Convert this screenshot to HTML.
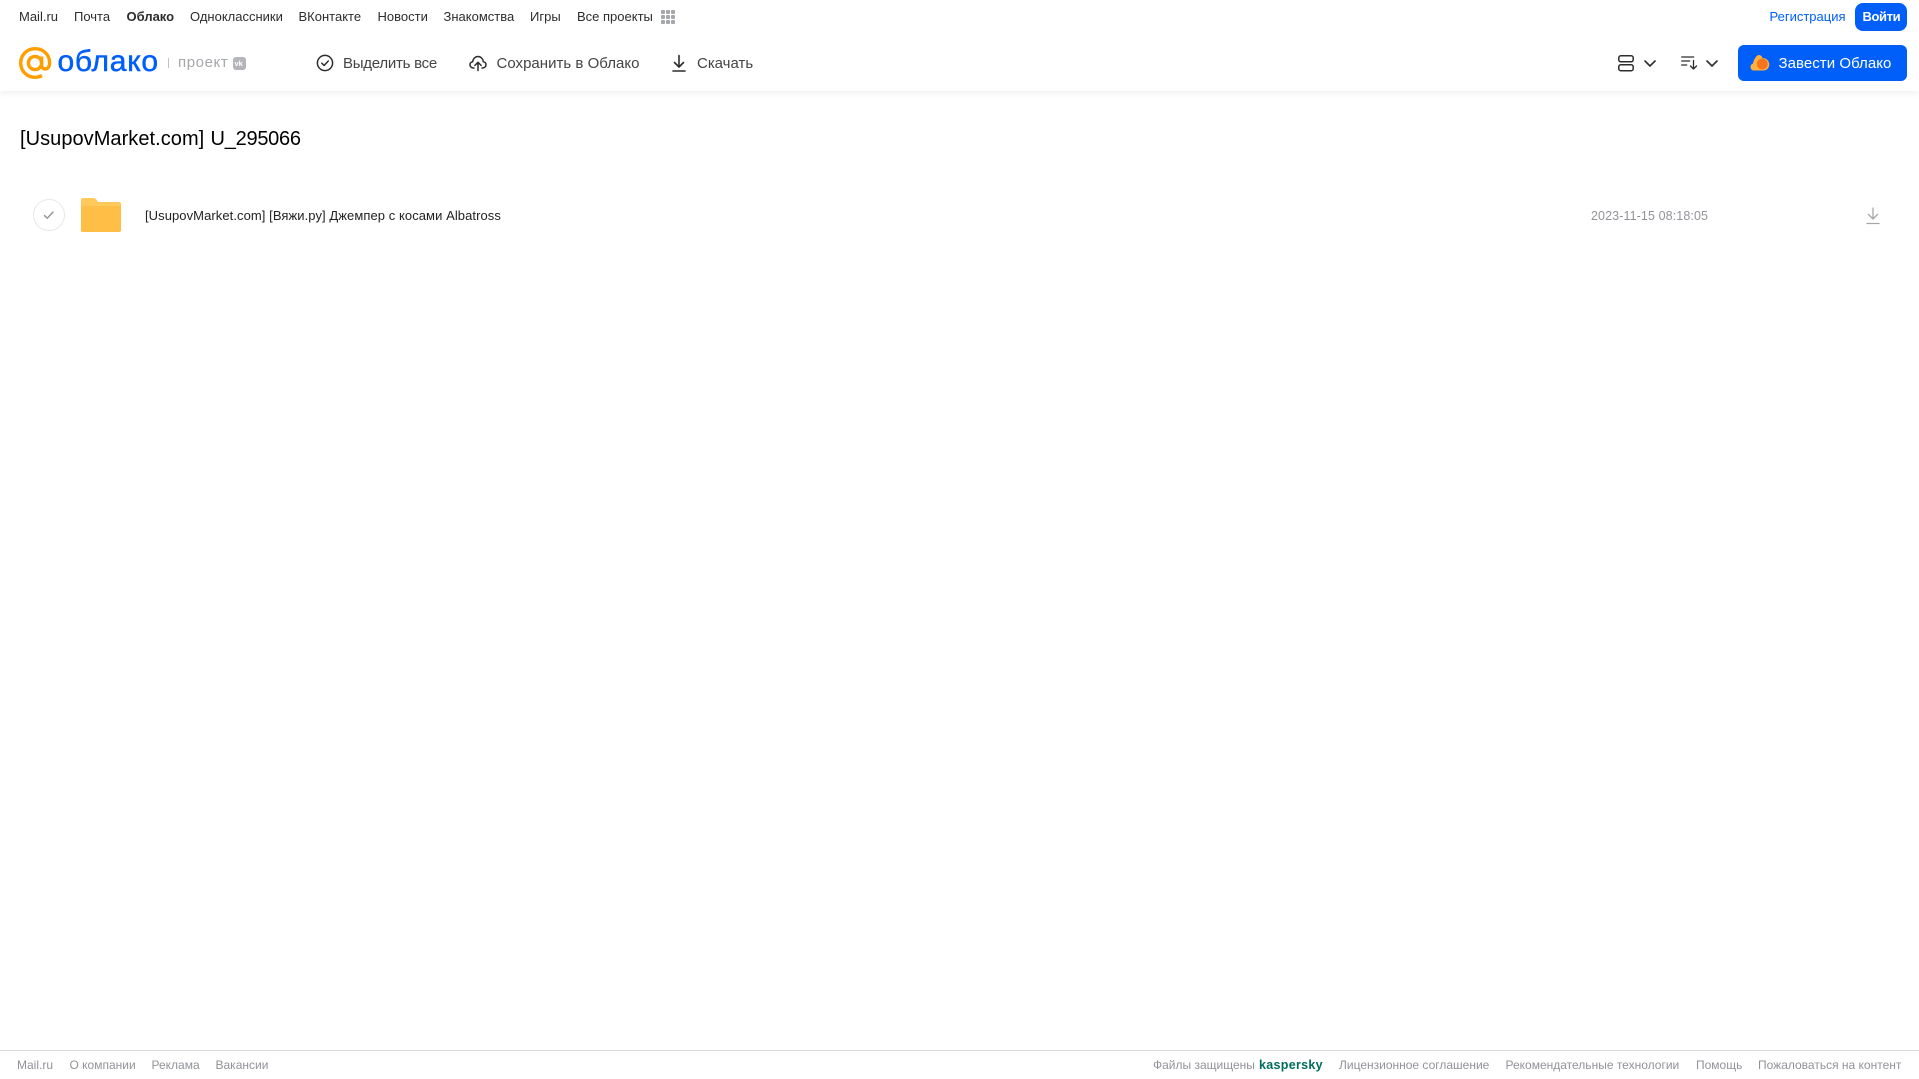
<!DOCTYPE html>
<html lang="ru">
<head>
<meta charset="utf-8">
<title>Облако</title>
<style>
html,body{margin:0;padding:0;background:#fff;width:1919px;height:1079px;overflow:hidden}
body{position:relative;font-family:"Liberation Sans","Noto Sans CJK SC",sans-serif}
.t{position:absolute;white-space:nowrap;line-height:18px}
.n{font-size:13px;top:8px;color:#2c2d2e}
.a{font-size:15px;top:55px;color:#444}
.f{font-size:12px;top:1056px;color:#919399}
svg{position:absolute;overflow:visible}
#hd{position:absolute;left:0;top:0;width:1919px;height:91px;background:#fff;box-shadow:0 2px 6px rgba(0,0,0,.07)}
</style>
</head>
<body>
<div id="hd"></div>

<span class="t n" style="left:19px">Mail.ru</span>
<span class="t n" style="left:74px">Почта</span>
<span class="t n" style="left:126.5px;font-weight:bold">Облако</span>
<span class="t n" style="left:190px">Одноклассники</span>
<span class="t n" style="left:298.5px">ВКонтакте</span>
<span class="t n" style="left:377.5px">Новости</span>
<span class="t n" style="left:443.5px">Знакомства</span>
<span class="t n" style="left:530px">Игры</span>
<span class="t n" style="left:577px">Все проекты</span>
<svg style="left:661px;top:10px" width="14" height="14" fill="#a5a7ab">
<rect x="0" y="0" width="4" height="4" rx="1"/><rect x="5" y="0" width="4" height="4" rx="1"/><rect x="10" y="0" width="4" height="4" rx="1"/>
<rect x="0" y="5" width="4" height="4" rx="1"/><rect x="5" y="5" width="4" height="4" rx="1"/><rect x="10" y="5" width="4" height="4" rx="1"/>
<rect x="0" y="10" width="4" height="4" rx="1"/><rect x="5" y="10" width="4" height="4" rx="1"/><rect x="10" y="10" width="4" height="4" rx="1"/>
</svg>

<span class="t n" style="left:1769.5px;color:#005ff9">Регистрация</span>
<div style="position:absolute;left:1855px;top:3px;width:52px;height:28px;border-radius:8px;background:#005ff9"></div>
<span class="t n" style="left:1862.5px;color:#fff;font-weight:bold;letter-spacing:-.4px">Войти</span>

<!-- logo -->
<svg style="left:19px;top:47px" width="33" height="33" viewBox="0 0 33 33" fill="none" stroke="#ff9e00" stroke-width="3.4">
<circle cx="16" cy="16" r="6.6"/>
<path d="M22.6 9.5v8.5c0 5.5 7.6 5.500 8-1.500C31 8 24.500 1.700 16 1.700 8 1.700 1.700 8 1.700 16S8 30.300 16 30.300c2.800 0 5-.6 7-1.800"/>
</svg>
<span class="t" style="left:57.500px;top:44px;font-size:30px;line-height:36px;color:#005ff9;letter-spacing:.75px;-webkit-text-stroke:.5px #005ff9">облако</span>
<div style="position:absolute;left:168px;top:58px;width:1px;height:10px;background:#bfc1c5"></div>
<span class="t" style="left:178px;top:54px;font-size:15px;color:#a5a7ab;letter-spacing:.6px">проект</span>
<div style="position:absolute;left:232.500px;top:56.500px;width:13.500px;height:13.500px;border-radius:3px;background:#b3b5b9"></div>
<span class="t" style="left:234.500px;top:54.500px;font-size:7.500px;color:#fff;font-weight:bold">vk</span>

<!-- actions -->
<svg style="left:316px;top:54px" width="18" height="18" viewBox="0 0 18 18" fill="none" stroke="#2c2d2e" stroke-width="1.500" stroke-linecap="round" stroke-linejoin="round">
<circle cx="9" cy="9" r="7.600"/><path d="M5.800 9.200l2.300 2.300 4.200-4.500"/>
</svg>
<span class="t a" style="left:343px;letter-spacing:-.25px">Выделить все</span>

<svg style="left:469px;top:54px" width="18" height="18" viewBox="0 0 18 18" fill="none" stroke="#2c2d2e" stroke-width="1.500" stroke-linecap="round" stroke-linejoin="round">
<path d="M5 14H4.300C2.300 14 1 12.500 1 10.800 1 9.100 2.200 7.900 3.700 7.700 4 4.700 6.300 2.500 9 2.500c2.800 0 5 2.200 5.300 5.200 1.500.2 2.700 1.400 2.700 3.100 0 1.700-1.300 3.200-3.300 3.200H13"/>
<path d="M9 16.500V8.500M5.900 11.400L9 8.300l3.100 3.100"/>
</svg>
<span class="t a" style="left:496.500px;letter-spacing:.02px">Сохранить в Облако</span>

<svg style="left:670px;top:54px" width="18" height="18" viewBox="0 0 18 18" fill="none" stroke="#2c2d2e" stroke-width="1.600" stroke-linecap="round" stroke-linejoin="round">
<path d="M9 1.500v11M4.500 8.500L9 13l4.500-4.500M3 17h12"/>
</svg>
<span class="t a" style="left:697px;letter-spacing:-.02px">Скачать</span>

<!-- right tools -->
<svg style="left:1618px;top:55px" width="16" height="17" viewBox="0 0 16 17" fill="none" stroke="#2c2d2e" stroke-width="1.500">
<rect x=".8" y=".8" width="14.400" height="6" rx="2"/><rect x=".8" y="9.700" width="14.400" height="6" rx="2"/>
</svg>
<svg style="left:1644px;top:60px" width="12" height="7" viewBox="0 0 12 7" fill="none" stroke="#2c2d2e" stroke-width="1.600" stroke-linecap="round" stroke-linejoin="round"><path d="M1 1l5 5 5-5"/></svg>
<svg style="left:1681px;top:56px" width="17" height="14" viewBox="0 0 17 14" fill="none" stroke="#2c2d2e" stroke-width="1.300" stroke-linecap="round" stroke-linejoin="round">
<path d="M.7 1h12M.7 5h8M.7 9h5M12.500 4.500v8.500M9.500 10l3 3 3-3"/>
</svg>
<svg style="left:1706px;top:60px" width="12" height="7" viewBox="0 0 12 7" fill="none" stroke="#2c2d2e" stroke-width="1.600" stroke-linecap="round" stroke-linejoin="round"><path d="M1 1l5 5 5-5"/></svg>

<div style="position:absolute;left:1738px;top:45px;width:169px;height:36px;border-radius:6px;background:#005ff9"></div>
<svg style="left:1750px;top:54px" width="20" height="17" viewBox="0 0 20 17">
<path d="M4 16.500C1.800 16.500.5 14.800.5 13c0-1.700 1-3 2.500-3.500C3.200 7.500 4 5.800 5.200 4 6.300 2 7.800.8 9.300 1c1.700.2 2.700 1.500 3.200 3.200 3.700-.3 6.800 2.800 6.800 6.300 0 3.500-2.600 6-5.800 6z" fill="#ffb13d"/>
<circle cx="12.300" cy="10" r="5.400" fill="#f5761f"/>
</svg>
<span class="t a" style="left:1778.500px;color:#fff;letter-spacing:.05px">Завести Облако</span>

<!-- title -->
<span class="t" style="left:20px;top:126px;font-size:20px;line-height:26px;color:#000;letter-spacing:.05px">[UsupovMarket.com]</span>
<span class="t" style="left:210.500px;top:126px;font-size:20px;line-height:26px;color:#000;letter-spacing:-.25px">U_295066</span>

<!-- row -->
<div style="position:absolute;left:33px;top:199px;width:30px;height:30px;border:1px solid #e7e8ea;border-radius:50%"></div>
<svg style="left:43px;top:210px" width="12" height="10" viewBox="0 0 12 10" fill="none" stroke="#8f9196" stroke-width="1.400" stroke-linecap="round" stroke-linejoin="round"><path d="M1.500 5.500l2.800 2.700L10 2"/></svg>
<svg style="left:81px;top:198px" width="40" height="34" viewBox="0 0 40 34">
<path d="M2 0h10.500c1.500 0 2.300.8 3 1.800L17 4h21a2 2 0 0 1 2 2v26a2 2 0 0 1-2 2H2a2 2 0 0 1-2-2V2a2 2 0 0 1 2-2z" fill="#ffc95c"/>
<path d="M0 8h38a2 2 0 0 1 2 0v24a2 2 0 0 1-2 2H2a2 2 0 0 1-2-2z" fill="#ffbf47"/>
</svg>
<span class="t" style="left:145px;top:207px;font-size:13px;color:#222;letter-spacing:.07px">[UsupovMarket.com] [Вяжи.ру] Джемпер с косами Albatross</span>
<span class="t" style="left:1591px;top:207px;font-size:12.500px;color:#919399;letter-spacing:.1px">2023-11-15 08:18:05</span>
<svg style="left:1866px;top:207px" width="14" height="18" viewBox="0 0 14 18" fill="none" stroke="#a5a7ab" stroke-width="1.300" stroke-linecap="round" stroke-linejoin="round">
<path d="M7 1v11M2.500 7.500L7 12l4.500-4.500M1 16.500h12"/>
</svg>

<!-- footer -->
<div style="position:absolute;left:0;top:1050px;width:1919px;height:1px;background:#d9d9d9"></div>
<span class="t f" style="left:17px">Mail.ru</span>
<span class="t f" style="left:69.500px">О компании</span>
<span class="t f" style="left:151.500px">Реклама</span>
<span class="t f" style="left:215.500px">Вакансии</span>
<span class="t f" style="left:1153px">Файлы защищены</span>
<span class="t f" style="left:1259px;color:#006d5c;font-weight:bold;font-size:12.500px;letter-spacing:.3px">kaspersky</span>
<span class="t f" style="left:1339px">Лицензионное соглашение</span>
<span class="t f" style="left:1505.500px">Рекомендательные технологии</span>
<span class="t f" style="left:1696px">Помощь</span>
<span class="t f" style="left:1758px">Пожаловаться на контент</span>
</body>
</html>
